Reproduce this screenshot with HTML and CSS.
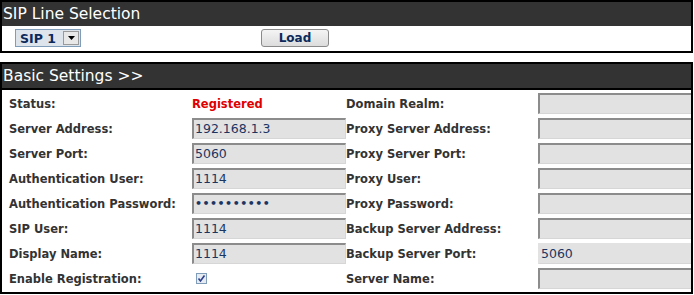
FILE: index.html
```html
<!DOCTYPE html>
<html>
<head>
<meta charset="utf-8">
<link rel="stylesheet" href="styles.css">
</head>
<body>
<div class="box box-line">
  <div class="head">SIP Line Selection</div>
  <div class="line-row">
    <div class="select"><span class="sel-text">SIP 1</span><span class="sel-btn"><svg width="7" height="4" viewBox="0 0 7 4"><path d="M0 0H7L3.5 4Z" fill="#000"/></svg></span></div>
    <button class="btn">Load</button>
  </div>
</div>
<div class="box box-basic">
  <div class="head">Basic Settings &gt;&gt;</div>
  <div class="grid">
    <div class="lbl">Status:</div><div class="val red">Registered</div>
    <div class="lbl">Domain Realm:</div><div class="val"><div class="inp"></div></div>

    <div class="lbl">Server Address:</div><div class="val"><div class="inp">192.168.1.3</div></div>
    <div class="lbl">Proxy Server Address:</div><div class="val"><div class="inp"></div></div>

    <div class="lbl">Server Port:</div><div class="val"><div class="inp">5060</div></div>
    <div class="lbl">Proxy Server Port:</div><div class="val"><div class="inp"></div></div>

    <div class="lbl">Authentication User:</div><div class="val"><div class="inp">1114</div></div>
    <div class="lbl">Proxy User:</div><div class="val"><div class="inp"></div></div>

    <div class="lbl">Authentication Password:</div><div class="val"><div class="inp pw">••••••••••</div></div>
    <div class="lbl">Proxy Password:</div><div class="val"><div class="inp"></div></div>

    <div class="lbl">SIP User:</div><div class="val"><div class="inp">1114</div></div>
    <div class="lbl">Backup Server Address:</div><div class="val"><div class="inp"></div></div>

    <div class="lbl">Display Name:</div><div class="val"><div class="inp">1114</div></div>
    <div class="lbl">Backup Server Port:</div><div class="val"><div class="inp flat">5060</div></div>

    <div class="lbl">Enable Registration:</div><div class="val"><span class="chk"><svg width="9" height="9" viewBox="0 0 9 9"><path d="M1.5 4.5L3.5 7L7.5 1.5" fill="none" stroke="#2b3f8a" stroke-width="1.6"/></svg></span></div>
    <div class="lbl">Server Name:</div><div class="val"><div class="inp"></div></div>
  </div>
</div>
</body>
</html>
```

FILE: styles.css
```css
html, body {
  margin: 0;
  padding: 0;
  background: #fff;
}
body {
  font-family: "DejaVu Sans", Verdana, sans-serif;
  width: 694px;
  height: 295px;
  overflow: hidden;
}
.box {
  width: 689px;
  border: 2px solid #000;
  background: #fff;
  overflow: hidden;
}
.box-line {
  height: 49px;
}
.box-basic {
  margin-top: 9px;
  height: 228px;
}
.head {
  background: #333;
  color: #fff;
  font-size: 15.5px;
  height: 24px;
  line-height: 24px;
  padding-left: 1px;
}
.box-basic .head {
  border-bottom: 2px solid #000;
}
.line-row {
  display: flex;
  align-items: center;
  height: 24px;
}
.select {
  margin-left: 13px;
  width: 64px;
  height: 16px;
  border: 1px solid #7f9db9;
  background: #dde4ec;
  display: flex;
  align-items: center;
  font-size: 12.5px;
  font-weight: bold;
  color: #0c2a5c;
}
.sel-text {
  flex: 1;
  padding-left: 4px;
}
.sel-btn {
  width: 16px;
  height: 14px;
  margin-right: 1px;
  background: #e8e8e8;
  border: 1px solid #9a9a9a;
  box-sizing: border-box;
  display: flex;
  align-items: center;
  justify-content: center;
}
.btn {
  margin-left: 180px;
  width: 68px;
  height: 18px;
  border: 1px solid #8a8a8a;
  border-radius: 3px;
  background: linear-gradient(#f4f4f4, #dcdcdc);
  font-family: "DejaVu Sans", Verdana, sans-serif;
  font-size: 12px;
  font-weight: bold;
  color: #0c2a5c;
  padding: 0;
}
.grid {
  display: grid;
  grid-template-columns: 183px 154px 192px 154px;
  grid-auto-rows: 25px;
  padding-left: 7px;
  margin-top: 1px;
}
.lbl {
  font-size: 11.5px;
  font-weight: bold;
  color: #333;
  display: flex;
  align-items: center;
  padding-top: 1px;
  white-space: nowrap;
}
.val {
  display: flex;
  align-items: center;
}
.red {
  color: #e00000;
  font-size: 11.5px;
  font-weight: bold;
  padding-top: 1px;
}
.inp {
  box-sizing: border-box;
  width: 154px;
  height: 21px;
  background: #e2e2e2;
  border-top: 2px solid #8c8c8c;
  border-left: 2px solid #8c8c8c;
  border-right: 1px solid #d6d6d6;
  border-bottom: 1px solid #d6d6d6;
  font-size: 12.5px;
  color: #1b3563;
  line-height: 18px;
  padding-left: 1px;
}
.inp.flat {
  border-top-color: #e2e2e2;
  border-left-color: #e2e2e2;
}
.pw {
  font-size: 11px;
  font-weight: bold;
  letter-spacing: 0.5px;
}
.chk {
  margin-left: 4px;
  width: 11px;
  height: 11px;
  box-sizing: border-box;
  border: 1px solid #7f9db9;
  background: #e6ebf2;
  display: flex;
  align-items: center;
  justify-content: center;
}
```
